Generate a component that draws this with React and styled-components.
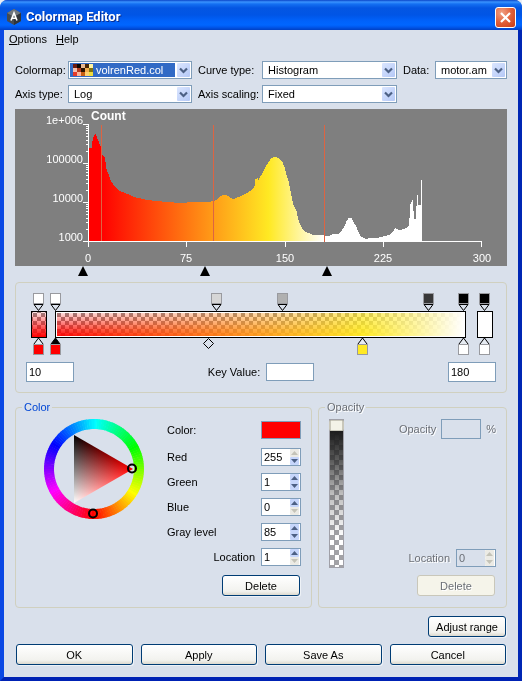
import React from "react";
import styled, { createGlobalStyle, css } from "styled-components";

const FONT = '"Liberation Sans", Arial, sans-serif';
const FACE = "#d9e0eb";
const EDGE = "#7f9db9";
const LINE = "#d0d0bf";

const Global = createGlobalStyle`
  *, *::before, *::after { box-sizing: border-box; }
  body { margin: 0; background: #e9eef5; }
  input, select, button { font: inherit; color: inherit; margin: 0; }
`;

/* ---------- window frame ---------- */

const Window = styled.div`
  min-height: 100vh;
  display: flex;
  flex-direction: column;
  border: solid;
  border-width: 0 4px 4px;
  border-color: #0a3fe0 #0026b4 #0022b4 #0a48e4;
  border-radius: 8px 8px 0 0;
  background: ${FACE};
  font: 11px/14px ${FONT};
  color: #000;
`;

const TitleBar = styled.header`
  height: 30px;
  margin: 0 -4px;
  padding: 4px 6px 0 7px;
  display: flex;
  align-items: center;
  gap: 5px;
  border-radius: 7px 7px 0 0;
  background: linear-gradient(#0a45c8 0, #3a93ff 2px, #1470f2 4px, #0456e2 8px, #0055e6 15px, #0062fb 21px, #0066ff 25px, #0058ee 27px, #0040c4 30px);
`;

const Title = styled.h1`
  flex: 1;
  margin: 0;
  font: bold 13px/18px Roboto, sans-serif;
  color: #fff;
  text-shadow: 1px 1px 0 #0a2e90;
`;

const CloseButton = styled.button`
  width: 21px;
  height: 21px;
  padding: 0;
  display: grid;
  place-items: center;
  border: 1px solid #fff;
  border-radius: 3px;
  background: radial-gradient(circle at 30% 25%, #f0a184 0, #e2603a 50%, #c93a12 100%);
`;

const MenuBar = styled.nav`
  display: flex;
  gap: 9px;
  padding: 2px 5px;
`;

const MenuItem = styled.button`
  padding: 0;
  border: 0;
  background: none;
  line-height: 15px;
`;

const Content = styled.main`
  padding: 12px 11px;
  display: flex;
  flex-direction: column;
`;

/* ---------- form parts ---------- */

const Settings = styled.form`
  display: grid;
  grid-template-columns: 53px minmax(0, 124fr) 70px minmax(0, 135fr) 38px minmax(0, 72fr);
  row-gap: 6px;
  align-items: center;
  margin-bottom: 6px;
`;

const SettingLabel = styled.label`
  padding-left: ${(p) => (p.$first ? 0 : 6)}px;
  white-space: nowrap;
`;

const ComboBox = styled.div`
  height: 18px;
  display: flex;
  align-items: stretch;
  border: 1px solid ${EDGE};
  background: #fff;
  padding: 1px;
`;

const ComboValue = styled.div`
  flex: 1;
  min-width: 0;
  display: flex;
  align-items: center;
  gap: 3px;
  padding-left: 4px;
  margin-right: 2px;
  ${(p) =>
    p.$active &&
    css`
      padding-left: 3px;
      background: #316ac5;
      color: #fff;
    `}
`;

const ComboSelect = styled.select`
  flex: 1;
  min-width: 0;
  height: 14px;
  padding: 0;
  border: 0;
  outline: 0;
  appearance: none;
  background: transparent;
  line-height: 14px;
`;

const ComboArrow = styled.svg`
  flex: none;
  width: 13px;
  height: 14px;
  border-radius: 1px;
  background: linear-gradient(135deg, #dbe6ff, #b4c8f6);
`;

const PushButton = styled.button`
  height: 21px;
  min-width: 78px;
  padding: 0 7px;
  border: 1px solid #003c74;
  border-radius: 3px;
  background: linear-gradient(#ffffff, #f2f2ee 80%, #dcd9ce);
  box-shadow: 1px 1px 0 #eef2f7;
  white-space: nowrap;
  &:disabled {
    border-color: #c9c7ba;
    background: #f5f4ea;
    box-shadow: none;
    color: #6b6f76;
    text-shadow: 1px 1px 0 #fff;
  }
`;

const TextBox = styled.input`
  width: ${(p) => p.$width}px;
  height: ${(p) => p.$height}px;
  padding: 0 2px;
  border: 1px solid ${EDGE};
  border-radius: 0;
  background: #fff;
  &:disabled {
    background: ${FACE};
  }
`;

const SpinFrame = styled.div`
  width: 40px;
  height: 18px;
  display: flex;
  border: 1px solid ${EDGE};
  background: ${(p) => (p.$disabled ? FACE : "#fff")};
`;

const SpinInput = styled.input`
  flex: 1;
  min-width: 0;
  padding: 0 0 0 2px;
  border: 0;
  outline: 0;
  background: transparent;
`;

const SpinButtons = styled.div`
  display: grid;
  grid-template-rows: 1fr 1fr;
  width: 10px;
  padding-right: 1px;
  background: #fff;
`;

const SpinButton = styled.button`
  display: grid;
  place-items: center;
  padding: 0;
  border: 0;
  border-radius: 1px;
  background: #c6d6fb;
  color: #4d6185;
  &:disabled {
    background: #ecebe5;
    color: #c4c3b8;
  }
`;

const Swatch = styled.button`
  width: 40px;
  height: 18px;
  padding: 0;
  border: 1px solid ${EDGE};
  background: #f00;
`;

/* ---------- panels ---------- */

const Drawing = styled.svg`
  display: block;
  width: 100%;
  height: auto;
`;

const ChartText = styled.text`
  font: 11px ${FONT};
  fill: #fff;
  text-anchor: ${(p) => p.$anchor};
`;

const ChartTitle = styled.text`
  font: bold 12px ${FONT};
  fill: #fff;
`;

const MapPanel = styled.section`
  margin-top: 5px;
  padding: 10px 0 10px;
  border: 1px solid ${LINE};
  border-radius: 4px;
`;

const KeyRow = styled.div`
  display: flex;
  align-items: center;
  justify-content: space-between;
  margin: 5px 10px 0;
`;

const KeyField = styled.div`
  display: flex;
  align-items: center;
  gap: 6px;
`;

const Groups = styled.div`
  display: grid;
  grid-template-columns: 297fr 189fr;
  gap: 6px;
  margin-top: 7px;
`;

const Group = styled.fieldset`
  min-width: 0;
  margin: 0;
  padding: 0;
  border: 1px solid ${LINE};
  border-radius: 4px;
  ${(p) =>
    p.disabled &&
    css`
      color: #6b6f76;
      text-shadow: 1px 1px 0 #fff;
    `}
`;

const GroupTitle = styled.legend`
  margin-left: 6px;
  padding: 0 2px;
  color: ${(p) => (p.$muted ? "#6b6f76" : "#0046d5")};
`;

const ColorBody = styled.div`
  display: flex;
  justify-content: space-between;
  padding: 4px 10px 11px 27px;
`;

const Wheel = styled.svg`
  flex: none;
  width: 102px;
  height: 102px;
`;

const Fields = styled.div`
  width: 134px;
  padding-top: 3px;
  display: flex;
  flex-direction: column;
  gap: 7px;
`;

const Field = styled.div`
  display: flex;
  align-items: center;
  justify-content: ${(p) => (p.$end ? "flex-end" : "space-between")};
  gap: 6px;
  height: 18px;
  margin-bottom: ${(p) => (p.$lead ? 2 : 0)}px;
`;

const ButtonLine = styled.div`
  display: flex;
  justify-content: flex-end;
  padding: ${(p) => p.$pad || "0"};
`;

const OpacityBody = styled.div`
  display: flex;
  align-items: flex-start;
  justify-content: space-between;
  padding: 5px 10px 11px;
`;

const OpacityFields = styled.div`
  display: flex;
  flex-direction: column;
  gap: 110px;
`;

const OpacityLine = styled.div`
  display: flex;
  align-items: center;
  justify-content: flex-end;
  gap: ${(p) => p.$gap}px;
`;

const Stack = styled.div`
  display: flex;
  flex-direction: column;
  gap: 8px;
`;

const OpacitySlider = styled.input`
  appearance: none;
  writing-mode: vertical-lr;
  direction: rtl;
  width: 15px;
  height: 149px;
  border: 1px solid #a0a0a8;
  background:
    linear-gradient(#1e1e1e 8%, rgba(40, 40, 40, 0.75) 28%, rgba(90, 90, 90, 0.4) 50%, rgba(255, 255, 255, 0) 80%),
    repeating-conic-gradient(#a2a2a6 0 25%, #fff 0 50%) 0 0 / 9px 10px;
  &::-webkit-slider-thumb {
    appearance: none;
    width: 15px;
    height: 11px;
    border: solid #c9c7ba;
    border-width: 1px 2px;
    border-radius: 2px;
    background: #f4f3e8;
  }
`;

const Actions = styled.footer`
  display: grid;
  grid-template-columns: repeat(4, 1fr);
  gap: 8px;
  padding: 7px 1px 0;
`;

/* ---------- small drawings ---------- */

const AppIcon = () => (
  <svg width="14" height="16" viewBox="0 0 14 16" aria-hidden="true">
    <path d="M7 0 14 4v8l-7 4-7-4V4z" fill="#454b52" />
    <path d="M7 0 14 4 7 8 0 4z" fill="#70777e" />
    <path d="M7 8 14 4v8l-7 4z" fill="#30353b" />
    <path d="M4 11.500 7 4l3 7.500M5.200 9.200h3.600" fill="none" stroke="#fff" strokeWidth="1.600" />
  </svg>
);

const CrossIcon = () => (
  <svg width="13" height="13" viewBox="0 0 13 13" aria-hidden="true">
    <path d="M2 2l9 9M11 2l-9 9" stroke="#fff" strokeWidth="2.200" />
  </svg>
);

const CheckSwatch = () => {
  const tones = [
    ["#6b1a10", "#0d0602", "#e8b890", "#4a2605", "#fff3a0"],
    ["#f4bfae", "#b53a1e", "#2c1402", "#f3ad4c", "#80720f"],
    ["#e53a2a", "#fbb59a", "#c85e12", "#fcd070", "#f0dc3c"],
  ];
  return (
    <svg width="20" height="12" viewBox="0 0 20 12" shapeRendering="crispEdges" aria-hidden="true">
      {tones.map((row, y) => row.map((c, x) => <rect key={`${x}-${y}`} x={x * 4} y={y * 4} width="4" height="4" fill={c} />))}
    </svg>
  );
};

const Caret = ({ up }) => (
  <svg width="7" height="4" viewBox="0 0 7 4" aria-hidden="true">
    <path d={up ? "M0 4 3.500 0 7 4z" : "M0 0 3.500 4 7 0z"} fill="currentColor" />
  </svg>
);

function Combo({ id, value, icon }) {
  return (
    <ComboBox>
      <ComboValue $active={Boolean(icon)}>
        {icon}
        <ComboSelect id={id} defaultValue={value}>
          <option>{value}</option>
        </ComboSelect>
      </ComboValue>
      <ComboArrow viewBox="0 0 13 14" aria-hidden="true">
        <path d="M3 5.500l3.500 3.500L10 5.500" fill="none" stroke="#4d6185" strokeWidth="2.200" />
      </ComboArrow>
    </ComboBox>
  );
}

function Spin({ id, value, max, min, disabled }) {
  return (
    <SpinFrame $disabled={disabled}>
      <SpinInput id={id} defaultValue={value} inputMode="numeric" />
      <SpinButtons>
        <SpinButton type="button" aria-label="Increase" disabled={max || disabled}><Caret up /></SpinButton>
        <SpinButton type="button" aria-label="Decrease" disabled={min || disabled}><Caret /></SpinButton>
      </SpinButtons>
    </SpinFrame>
  );
}

/* ---------- histogram ---------- */

const PROFILE = [
  [73, 35], [74, 39], [76, 39], [77, 32], [78, 28], [79, 26], [80, 25], [81, 27], [82, 30], [83, 32], [84, 35], [86, 39],
  [87, 46], [89, 48], [90, 53], [91, 60], [93, 65], [95, 71], [97, 74], [99, 77], [101, 79], [103, 81], [107, 83],
  [112, 85], [115, 86], [118, 88], [123, 89], [132, 91], [142, 92], [152, 93], [165, 94], [178, 93], [192, 93], [198, 92],
  [202, 90], [204, 88], [207, 86], [210, 86], [213, 87], [215, 89], [218, 90], [223, 88], [228, 86], [233, 83], [237, 80],
  [239, 77], [240, 70], [242, 69], [243, 71], [245, 67], [246, 66], [248, 62], [250, 58], [253, 53], [255, 50], [258, 48],
  [261, 48], [264, 50], [267, 53], [269, 58], [271, 66], [273, 72], [275, 82], [276, 87], [278, 96], [281, 102], [283, 111],
  [285, 116], [287, 120], [289, 122], [293, 124], [298, 126], [304, 126], [313, 127], [318, 125], [323, 125], [326, 122],
  [329, 117], [331, 112], [333, 109], [336, 109], [338, 113], [341, 118], [343, 123], [345, 127], [347, 128], [350, 130],
  [354, 129], [361, 129], [366, 128], [369, 127], [374, 126], [377, 123], [380, 119], [383, 121], [389, 120], [393, 117],
  [394, 109], [395, 95], [397, 91], [398, 102], [399, 110], [400, 110], [401, 97], [402, 86], [403, 96], [405, 96],
  [406, 71], [407, 71],
];

const histogramPath = (() => {
  let d = "M73 132";
  let i = 0;
  for (let x = 73; x < 407; x += 1) {
    while (PROFILE[i + 1][0] <= x) i += 1;
    const [x0, y0] = PROFILE[i];
    const [x1, y1] = PROFILE[i + 1];
    const y = Math.round(y0 + ((y1 - y0) * (x - x0)) / (x1 - x0));
    d += `V${y}H${x + 1}`;
  }
  return `${d}V132Z`;
})();

const minorTicks = [0, 1, 2].flatMap((k) =>
  [2, 3, 4, 5, 6, 7, 8, 9].map((n) => Math.round(132 - 39 * (k + Math.log10(n))))
);

const Histogram = () => (
  <Drawing viewBox="0 0 492 168" role="img" aria-label="Histogram">
    <defs>
      <linearGradient id="ramp" gradientUnits="userSpaceOnUse" x1="86" x2="309" y1="0" y2="0">
        <stop offset="0" stopColor="#f00" />
        <stop offset="0.752" stopColor="#ffe923" />
        <stop offset="1" stopColor="#fff" />
      </linearGradient>
    </defs>
    <rect width="492" height="157" fill="#7f7f7f" />
    <path d={histogramPath} fill="url(#ramp)" shapeRendering="crispEdges" />
    <g fill="#dd6442" shapeRendering="crispEdges">
      <rect x="86" y="16" width="1" height="117" />
      <rect x="198" y="16" width="1" height="117" />
    </g>
    <g fill="#fff" shapeRendering="crispEdges">
      <rect x="73" y="15" width="1" height="118" />
      <rect x="68" y="132" width="399" height="1" />
      {[15, 54, 93].map((y) => <rect key={y} x="68" y={y} width="5" height="1" />)}
      {minorTicks.map((y) => <rect key={y} x="71" y={y} width="2" height="1" />)}
      {[73, 171, 270, 368, 466].map((x) => <rect key={x} x={x} y="132" width="1" height="6" />)}
    </g>
    <rect x="309" y="16" width="1" height="117" fill="#dd6442" shapeRendering="crispEdges" />
    <ChartTitle x="76" y="11">Count</ChartTitle>
    {["1e+006", "100000", "10000", "1000"].map((t, i) => (
      <ChartText key={t} $anchor="end" x="68" y={15 + i * 39}>{t}</ChartText>
    ))}
    {["0", "75", "150", "225", "300"].map((t, i) => (
      <ChartText key={t} $anchor="middle" x={73 + Math.round(i * 98.4)} y="153">{t}</ChartText>
    ))}
    {[68, 190, 312].map((x) => (
      <path key={x} d={`M${x} 157l5 10h-10z`} fill="#000" />
    ))}
  </Drawing>
);

/* ---------- colormap bar ---------- */

const opacityKeys = [[22, "#fff"], [39, "#fff"], [200, "#d6d6d6"], [266, "#b0b0b0"], [412, "#383838"], [447, "#000"], [468, "#000"]];
const colorKeys = [[22, "#f00"], [39, "#f00", true], [346, "#ffe923"], [447, "#fff"], [468, "#fff"]];

const ColormapBar = () => (
  <Drawing viewBox="0 0 490 64" role="img" aria-label="Colormap with colour and opacity keys">
    <defs>
      <pattern id="checks" patternUnits="userSpaceOnUse" x="41" y="20" width="8" height="8">
        <rect width="8" height="8" fill="#fff" />
        <path d="M0 0h4v4H0zM4 4h4v4H4z" fill="#928e8e" />
      </pattern>
      <linearGradient id="bar" gradientUnits="userSpaceOnUse" x1="40" x2="448" y1="0" y2="0">
        <stop offset="0" stopColor="#f00" />
        <stop offset="0.752" stopColor="#ffe923" />
        <stop offset="1" stopColor="#fff" />
      </linearGradient>
      <linearGradient id="down" x1="0" x2="0" y1="0" y2="1">
        <stop offset="0" stopColor="#fff" stopOpacity="0.100" />
        <stop offset="1" stopColor="#fff" />
      </linearGradient>
      <linearGradient id="across" x1="0" x2="1" y1="0" y2="0">
        <stop offset="0" stopColor="#fff" stopOpacity="0" />
        <stop offset="0.550" stopColor="#fff" stopOpacity="0.300" />
        <stop offset="0.900" stopColor="#fff" stopOpacity="0.800" />
        <stop offset="1" stopColor="#fff" />
      </linearGradient>
      <mask id="fade"><rect x="0" y="19" width="490" height="25" fill="url(#down)" /></mask>
      <mask id="rise"><rect x="41" y="20" width="409" height="24" fill="url(#across)" /></mask>
    </defs>
    <g shapeRendering="crispEdges">
      <rect x="15" y="18" width="16" height="27" fill="#000" />
      <rect x="16" y="19" width="14" height="25" fill="url(#checks)" />
      <rect x="16" y="19" width="14" height="25" fill="#f00" mask="url(#fade)" />
      <rect x="39" y="18" width="411" height="27" fill="#000" />
      <rect x="40" y="19" width="409" height="25" fill="#fff" />
      <rect x="41" y="20" width="408" height="23" fill="url(#checks)" />
      <rect x="41" y="20" width="408" height="23" fill="url(#bar)" mask="url(#fade)" />
      <rect x="41" y="20" width="408" height="23" fill="url(#bar)" mask="url(#rise)" />
      <rect x="461" y="18" width="16" height="27" fill="#000" />
      <rect x="462" y="19" width="14" height="25" fill="#fff" />
      {opacityKeys.map(([x]) => (
        <rect key={x} x={x - 5} y="0" width="11" height="11" fill="#999a9f" />
      ))}
      {opacityKeys.map(([x, c]) => (
        <rect key={x} x={x - 4} y="1" width="9" height="9" fill={c} />
      ))}
      {colorKeys.map(([x]) => (
        <rect key={x} x={x - 5} y="51" width="11" height="11" fill="#999a9f" />
      ))}
      {colorKeys.map(([x, c]) => (
        <rect key={x} x={x - 4} y="52" width="9" height="9" fill={c} />
      ))}
    </g>
    <g stroke="#000" fill="none">
      {opacityKeys.map(([x]) => (
        <path key={x} d={`M${x - 4} 11.500h9l-4.500 6z`} />
      ))}
      {colorKeys.map(([x, c, solid]) => (
        <path key={x} d={`M${x - 4} 51l4.500-6 4.500 6`} fill={solid ? "#000" : "#e6ebf2"} />
      ))}
      <path d="M192.500 45.500l5 5-5 5-5-5z" />
    </g>
  </Drawing>
);

/* ---------- hue wheel ---------- */

const wheelSegments = Array.from({ length: 120 }, (_, i) => {
  const point = (deg, r) => {
    const a = ((deg - 90) * Math.PI) / 180;
    return `${(51 + r * Math.cos(a)).toFixed(2)} ${(51 + r * Math.sin(a)).toFixed(2)}`;
  };
  const a = i * 3;
  const b = a + 3.6;
  return {
    d: `M${point(a, 50)}A50 50 0 0 1 ${point(b, 50)}L${point(b, 40)}A40 40 0 0 0 ${point(a, 40)}Z`,
    fill: `hsl(${(180 - a + 360) % 360} 100% 50%)`,
  };
});

const BlendedFace = styled.path`
  mix-blend-mode: plus-lighter;
`;

const ColorWheel = () => (
  <Wheel viewBox="0 0 102 102" role="img" aria-label="Hue, saturation and value">
    <defs>
      <linearGradient id="toRed" gradientUnits="userSpaceOnUse" x1="31" x2="90" y1="0" y2="0">
        <stop offset="0" stopColor="#000" />
        <stop offset="1" stopColor="#f00" />
      </linearGradient>
      <linearGradient id="toWhite" gradientUnits="userSpaceOnUse" x1="60.500" y1="34" x2="31" y2="85">
        <stop offset="0" stopColor="#000" />
        <stop offset="1" stopColor="#fff" />
      </linearGradient>
    </defs>
    {wheelSegments.map((s) => <path key={s.d} d={s.d} fill={s.fill} />)}
    <path d="M31 17 90 51 31 85z" fill="url(#toRed)" />
    <BlendedFace d="M31 17 90 51 31 85z" fill="url(#toWhite)" />
    <g fill="none" stroke="#000" strokeWidth="2">
      <circle cx="89" cy="50.500" r="4" />
      <circle cx="50" cy="95.500" r="4" />
    </g>
  </Wheel>
);

const channels = [
  { id: "red", label: "Red", value: "255", max: true },
  { id: "green", label: "Green", value: "1" },
  { id: "blue", label: "Blue", value: "0", min: true },
  { id: "gray", label: "Gray level", value: "85" },
];

export default function App() {
  return (
    <>
      <Global />
      <Window>
        <TitleBar>
          <AppIcon />
          <Title>Colormap Editor</Title>
          <CloseButton aria-label="Close"><CrossIcon /></CloseButton>
        </TitleBar>
        <MenuBar>
          <MenuItem><u>O</u>ptions</MenuItem>
          <MenuItem><u>H</u>elp</MenuItem>
        </MenuBar>
        <Content>
          <Settings>
            <SettingLabel $first htmlFor="colormap">Colormap:</SettingLabel>
            <Combo id="colormap" value="volrenRed.col" icon={<CheckSwatch />} />
            <SettingLabel htmlFor="curve">Curve type:</SettingLabel>
            <Combo id="curve" value="Histogram" />
            <SettingLabel htmlFor="data">Data:</SettingLabel>
            <Combo id="data" value="motor.am" />
            <SettingLabel $first htmlFor="axis">Axis type:</SettingLabel>
            <Combo id="axis" value="Log" />
            <SettingLabel htmlFor="scaling">Axis scaling:</SettingLabel>
            <Combo id="scaling" value="Fixed" />
          </Settings>

          <Histogram />

          <MapPanel>
            <ColormapBar />
            <KeyRow>
              <TextBox aria-label="Range minimum" defaultValue="10" $width={48} $height={20} />
              <KeyField>
                <label htmlFor="key">Key Value:</label>
                <TextBox id="key" defaultValue="" $width={48} $height={18} />
              </KeyField>
              <TextBox aria-label="Range maximum" defaultValue="180" $width={48} $height={20} />
            </KeyRow>
          </MapPanel>

          <Groups>
            <Group>
              <GroupTitle>Color</GroupTitle>
              <ColorBody>
                <ColorWheel />
                <Fields>
                  <Field $lead>
                    <label htmlFor="swatch">Color:</label>
                    <Swatch id="swatch" type="button" />
                  </Field>
                  {channels.map((c) => (
                    <Field key={c.id}>
                      <label htmlFor={c.id}>{c.label}</label>
                      <Spin {...c} />
                    </Field>
                  ))}
                  <Field $end>
                    <label htmlFor="location">Location</label>
                    <Spin id="location" value="1" min />
                  </Field>
                  <ButtonLine $pad="2px 1px 0 0">
                    <PushButton type="button">Delete</PushButton>
                  </ButtonLine>
                </Fields>
              </ColorBody>
            </Group>

            <Group disabled>
              <GroupTitle $muted>Opacity</GroupTitle>
              <OpacityBody>
                <OpacitySlider type="range" aria-label="Opacity level" min="0" max="100" defaultValue="100" />
                <OpacityFields>
                  <OpacityLine $gap={5}>
                    <label htmlFor="opacity">Opacity</label>
                    <TextBox id="opacity" defaultValue="" $width={40} $height={20} />
                    <span>%</span>
                  </OpacityLine>
                  <Stack>
                    <OpacityLine $gap={6}>
                      <label htmlFor="olocation">Location</label>
                      <Spin id="olocation" value="0" disabled />
                    </OpacityLine>
                    <ButtonLine $pad="0 1px 0 0">
                      <PushButton type="button">Delete</PushButton>
                    </ButtonLine>
                  </Stack>
                </OpacityFields>
              </OpacityBody>
            </Group>
          </Groups>

          <ButtonLine $pad="8px 1px 0">
            <PushButton type="button">Adjust range</PushButton>
          </ButtonLine>
          <Actions>
            <PushButton type="button">OK</PushButton>
            <PushButton type="button">Apply</PushButton>
            <PushButton type="button">Save As</PushButton>
            <PushButton type="button">Cancel</PushButton>
          </Actions>
        </Content>
      </Window>
    </>
  );
}
